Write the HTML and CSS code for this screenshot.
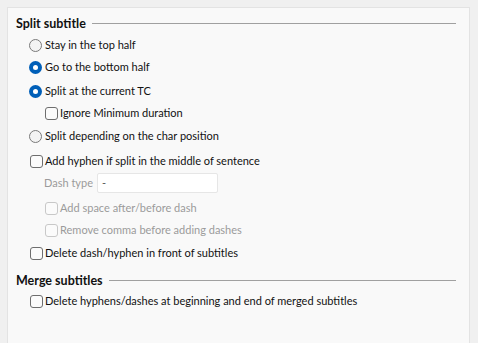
FILE: index.html
```html
<!DOCTYPE html>
<html>
<head>
<meta charset="utf-8">
<link rel="stylesheet" href="styles.css">
</head>
<body>
<div class="panel">
  <div class="group-head first"><span class="group-title">Split subtitle</span><span class="group-line"></span></div>

  <div class="row lvl1 g2"><span class="radio"></span><span class="label">Stay in the top half</span></div>
  <div class="row lvl1 g2"><span class="radio on"></span><span class="label">Go to the bottom half</span></div>
  <div class="row lvl1 g4"><span class="radio on"></span><span class="label">Split at the current TC</span></div>
  <div class="row lvl2 g2"><span class="check"></span><span class="label">Ignore Minimum duration</span></div>
  <div class="row lvl1 g3"><span class="radio"></span><span class="label">Split depending on the char position</span></div>
  <div class="row lvl1 g5"><span class="check"></span><span class="label">Add hyphen if split in the middle of sentence</span></div>
  <div class="row lvl2b g2"><span class="label dim dash-label">Dash type</span><span class="field">-</span></div>
  <div class="row lvl2 g5"><span class="check off"></span><span class="label dim">Add space after/before dash</span></div>
  <div class="row lvl2 g2"><span class="check off"></span><span class="label dim">Remove comma before adding dashes</span></div>
  <div class="row lvl1 g3"><span class="check"></span><span class="label">Delete dash/hyphen in front of subtitles</span></div>

  <div class="group-head g7"><span class="group-title">Merge subtitles</span><span class="group-line"></span></div>
  <div class="row lvl1 g1"><span class="check"></span><span class="label">Delete hyphens/dashes at beginning and end of merged subtitles</span></div>
</div>
</body>
</html>
```
FILE: styles.css
```css
html, body {
  margin: 0;
  padding: 0;
  background: #f0f0f0;
  height: 100%;
  overflow: hidden;
}
body {
  font-family: "Lato", "Noto Sans", sans-serif;
  font-size: 11px;
  color: #111111;
}
.panel {
  box-sizing: border-box;
  margin: 7px 0 0 7px;
  width: 463px;
  height: 336px;
  background: #f9f9f9;
  border: 1px solid #e3e3e3;
  border-bottom: none;
  display: flex;
  flex-direction: column;
}
.group-head {
  height: 20px;
  display: flex;
  align-items: center;
  padding-left: 8px;
  padding-right: 13px;
}
.group-head.first { margin-top: 5px; }
.group-title {
  font-weight: bold;
  font-size: 12.5px;
  white-space: nowrap;
}
.group-line {
  flex: 1;
  height: 1px;
  background: #a0a0a0;
  margin-left: 6px;
}
.row {
  height: 20px;
  display: flex;
  align-items: center;
  white-space: nowrap;
}
.lvl1 { padding-left: 21px; }
.lvl2 { padding-left: 36px; }
.lvl2b { padding-left: 36px; }
.g1 { margin-top: 1px; }
.g2 { margin-top: 2px; }
.g3 { margin-top: 3px; }
.g4 { margin-top: 4px; }
.g5 { margin-top: 5px; }
.g7 { margin-top: 7px; }
.radio {
  box-sizing: border-box;
  width: 13px;
  height: 13px;
  border-radius: 50%;
  border: 1px solid #7a7a7a;
  background: #f3f3f3;
  margin-right: 3px;
  position: relative;
}
.radio.on {
  border: none;
  background: #005fb8;
}
.radio.on::after {
  content: "";
  position: absolute;
  left: 4px;
  top: 4px;
  width: 5px;
  height: 5px;
  border-radius: 50%;
  background: #ffffff;
}
.check {
  box-sizing: border-box;
  width: 13px;
  height: 13px;
  border-radius: 3px;
  border: 1px solid #6e6e6e;
  background: #fbfbfb;
  margin-left: 1px;
  margin-right: 2px;
}
.check.off {
  border-color: #c8c8c8;
}
.label { line-height: 20px; }
.dim { color: #9b9b9b; }
.dash-label { width: 53px; }
.field {
  box-sizing: border-box;
  width: 121px;
  height: 20px;
  background: #ffffff;
  border: 1px solid #e6e6e6;
  border-radius: 2px;
  padding-left: 4px;
  line-height: 17px;
  color: #555;
}
```
